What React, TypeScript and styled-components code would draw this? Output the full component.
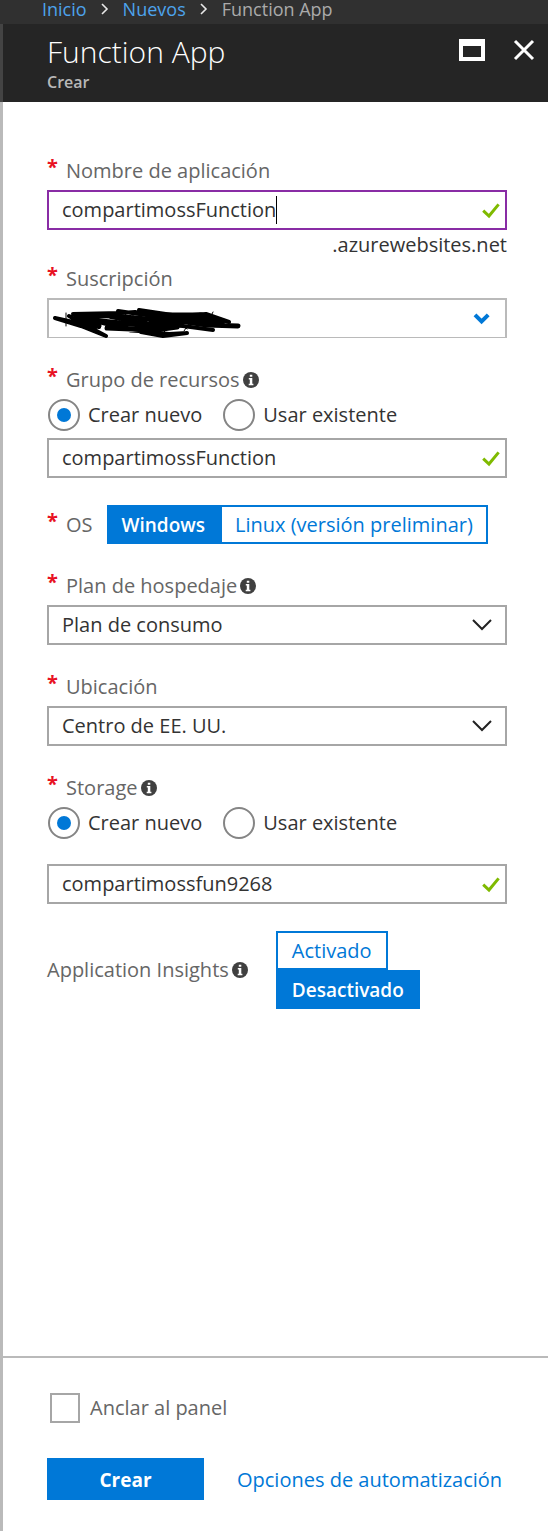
import React, { useState } from "react";
import styled, { createGlobalStyle } from "styled-components";

const GlobalStyle = createGlobalStyle`
  *, *::before, *::after { box-sizing: border-box; }
  body { margin: 0; background: #fff; }
  body, button, input, select {
    font-family: "Open Sans", "Noto Sans", sans-serif;
    font-size: 20px;
    line-height: 24px;
  }
`;

const Page = styled.div`
  display: flex;
  flex-direction: column;
  min-height: 100vh;
  color: #333;
`;

const Breadcrumb = styled.nav`
  display: flex;
  align-items: center;
  gap: 14px;
  height: 24px;
  padding: 0 42px 6px;
  background: #303030;
  font-size: 18px;
  color: #aaa;
  white-space: nowrap;
`;

const CrumbLink = styled.a`
  color: #4da3ec;
  text-decoration: none;
`;

const Header = styled.header`
  display: flex;
  justify-content: space-between;
  align-items: flex-start;
  height: 78px;
  padding: 10px 13px 0 44px;
  border-left: 3px solid #444;
  background: #252525;
`;

const Title = styled.h1`
  margin: 0;
  font-size: 30px;
  line-height: 36px;
  font-weight: 300;
  color: #fff;
`;

const Subtitle = styled.p`
  margin: 0;
  font-size: 16px;
  line-height: 24px;
  font-weight: 600;
  color: #b8b8b8;
`;

const WindowActions = styled.div`
  display: flex;
  align-items: center;
  gap: 28px;
  height: 32px;
`;

const IconButton = styled.button`
  display: flex;
  padding: 0;
  border: 0;
  background: none;
  cursor: pointer;
`;

const Blade = styled.div`
  display: flex;
  flex: 1;
  flex-direction: column;
  border-left: 3px solid #bababa;
`;

const Form = styled.form`
  display: flex;
  flex: 1;
  flex-direction: column;
  gap: 27px;
  padding: 54px 41px 30px 44px;
`;

const Section = styled.div`
  display: flex;
  flex-direction: column;
  gap: 7px;
  padding-top: 3px;
`;

const FieldGroup = styled.div`
  display: flex;
  flex-direction: column;
  gap: 7px;
`;

const LabelRow = styled.div`
  display: flex;
  align-items: center;
  gap: 3px;
  height: 24px;
  color: #666;
  white-space: nowrap;
`;

const Star = styled.span`
  align-self: flex-start;
  width: 16px;
  line-height: 16px;
  font-weight: 700;
  color: #e81123;
`;

const InputFrame = styled.div<{ $focused?: boolean }>`
  display: flex;
  align-items: center;
  height: 40px;
  padding: 0 5px 0 13px;
  border: 2px solid ${(p) => (p.$focused ? "#892ca5" : "#a6a6a6")};
`;

const TextInput = styled.input`
  field-sizing: content;
  max-width: 90%;
  height: 28px;
  padding: 0 0 2px;
  border: 0;
  outline: 0;
  background: none;
  color: #333;
`;

const Caret = styled.span`
  width: 1px;
  height: 28px;
  background: #000;
`;

const Spacer = styled.span`
  flex: 1;
`;

const Suffix = styled.div`
  margin-top: -4px;
  text-align: right;
`;

const SelectFrame = styled.div<{ $muted?: boolean }>`
  position: relative;
  height: 40px;
  border: 2px solid ${(p) => (p.$muted ? "#bababa" : "#a6a6a6")};
  border-bottom-width: ${(p) => (p.$muted ? "1px" : "2px")};
`;

const Select = styled.select`
  appearance: none;
  width: 100%;
  height: 100%;
  padding: 0 40px 0 13px;
  border: 0;
  border-radius: 0;
  background: none;
  color: #333;
`;

const SelectIcon = styled.span`
  position: absolute;
  top: 0;
  right: 13px;
  bottom: 0;
  display: flex;
  align-items: center;
  pointer-events: none;
`;

const ScribbleLayer = styled.span`
  position: absolute;
  top: 8px;
  left: 2px;
  display: flex;
  pointer-events: none;
`;

const RadioRow = styled.div`
  display: flex;
  gap: 21px;
  padding-left: 1px;
`;

const RadioLabel = styled.label`
  display: flex;
  align-items: center;
  gap: 8px;
  height: 32px;
`;

const Radio = styled.input`
  appearance: none;
  display: grid;
  place-items: center;
  width: 32px;
  height: 32px;
  margin: 0;
  border: 2px solid #858585;
  border-radius: 50%;
  &:checked::before {
    content: "";
    width: 14px;
    height: 14px;
    border-radius: 50%;
    background: #0078d7;
  }
`;

const StorageSection = styled.div`
  display: flex;
  flex-direction: column;
  gap: 25px;
`;

const ToggleRow = styled.div`
  display: flex;
  align-items: center;
  gap: 14px;
`;

const InsightsRow = styled(ToggleRow)`
  gap: 28px;
`;

const Toggle = styled.div<{ $stacked?: boolean }>`
  display: flex;
  flex-direction: ${(p) => (p.$stacked ? "column" : "row")};
  align-items: flex-start;
`;

const ToggleButton = styled.button<{ $stacked?: boolean }>`
  height: 39px;
  padding: 0 ${(p) => (p.$stacked ? "14px" : "13px")};
  border: 2px solid #0078d7;
  background: #fff;
  color: #0078d7;
  white-space: nowrap;
  &[aria-pressed="true"] {
    background: #0078d7;
    color: #fff;
    font-size: 19px;
    font-weight: 600;
  }
  & + & {
    margin-left: ${(p) => (p.$stacked ? "0" : "-2px")};
  }
`;

const Footer = styled.footer`
  display: flex;
  flex-direction: column;
  gap: 35px;
  padding: 35px 44px 31px;
  border-top: 2px solid #bababa;
`;

const CheckLabel = styled.label`
  display: flex;
  align-items: center;
  gap: 10px;
  padding-left: 3px;
  color: #666;
`;

const Checkbox = styled.input`
  appearance: none;
  width: 30px;
  height: 30px;
  margin: 0;
  border: 2px solid #a6a6a6;
  &:checked {
    background: #0078d7;
  }
`;

const Actions = styled.div`
  display: flex;
  align-items: center;
  gap: 33px;
`;

const CreateButton = styled.button`
  width: 157px;
  height: 42px;
  padding: 2px 0 0;
  border: 0;
  background: #0078d7;
  color: #fff;
  font-size: 19px;
  font-weight: 700;
`;

const ActionLink = styled.a`
  padding-top: 2px;
  color: #0078d7;
  text-decoration: none;
  white-space: nowrap;
`;

const CrumbArrow = () => (
  <svg width="8" height="12" viewBox="0 0 8 12" fill="none" stroke="#e8e8e8" strokeWidth="1.6" aria-hidden="true">
    <path d="M1 1l5 5-5 5" />
  </svg>
);

const Check = () => (
  <svg width="18" height="18" viewBox="0 0 18 18" fill="none" stroke="#7fba00" strokeWidth="3" aria-hidden="true">
    <path d="M1.2 9.6L7 15 16.6 3.4" />
  </svg>
);

const Chevron = () => (
  <svg width="20" height="12" viewBox="0 0 20 12" fill="none" stroke="#222" strokeWidth="2" aria-hidden="true">
    <path d="M1 1l9 9 9-9" />
  </svg>
);

const BoldChevron = () => (
  <svg width="20" height="12" viewBox="0 0 20 12" fill="none" stroke="#0078d7" strokeWidth="4" aria-hidden="true">
    <path d="M3 1.9L9.6 8.4l6.6-6.5" />
  </svg>
);

const Info = () => (
  <svg width="16" height="16" viewBox="0 0 16 16" role="img" aria-label="Información">
    <circle cx="8" cy="8" r="8" fill="#404040" />
    <path d="M6.8 2.7h2.5v2H6.8zM5.8 6h3.5v5.8h1.1v1.4H5.7v-1.4h1.1V7.4h-1z" fill="#fff" />
  </svg>
);

const Scribble = () => (
  <svg width="192" height="32" viewBox="0 0 192 32" fill="none" stroke="#000" strokeLinecap="round" strokeLinejoin="round" aria-hidden="true">
    <path d="M15 5v13M28 8l3 8M67 5l2 12M75 5l-3 12M82 6v10M106 18v6M116 16l-3 9M130 14l6 7M139 14l-6 9M162 4l-3 6M149 5v10" strokeWidth="1" />
    <path
      d="M4 10L22 14 48 19 M4 10L30 18 55 28 40 20 18 8 M22 6L70 5 84 4 110 11 M67 3L88 6 120 10 M88 2L128 8 155 6 178 14 M60 9L96 16 132 18 162 22 M34 9L70 19 100 24 118 26 136 25 M90 24L112 28 136 25"
      strokeWidth="4"
    />
    <path
      d="M26 7L62 8 96 11 M30 11L70 15 108 18 M24 10L48 18 M100 9L140 10 170 14 M104 7L150 7 172 13 M128 13L156 17 187 18 M100 13L140 14 M50 14L80 22 112 24 M56 20L104 22 126 19 M86 15L116 18"
      strokeWidth="5"
    />
  </svg>
);

const storageChoices = ["Crear nuevo", "Usar existente"];

function RadioPair({ name, label }: { name: string; label: string }) {
  return (
    <RadioRow role="radiogroup" aria-label={label}>
      {storageChoices.map((text, i) => (
        <RadioLabel key={text}>
          <Radio type="radio" name={name} defaultChecked={i === 0} />
          {text}
        </RadioLabel>
      ))}
    </RadioRow>
  );
}

interface FieldLabelProps {
  text: string;
  htmlFor?: string;
  info?: boolean;
  optional?: boolean;
}

function FieldLabel({ text, htmlFor, info, optional }: FieldLabelProps) {
  return (
    <LabelRow>
      {!optional && <Star>*</Star>}
      {htmlFor ? <label htmlFor={htmlFor}>{text}</label> : <span>{text}</span>}
      {info && <Info />}
    </LabelRow>
  );
}

interface ValidatedInputProps {
  id: string;
  value: string;
  label?: string;
  focused?: boolean;
}

function ValidatedInput({ id, value, label, focused }: ValidatedInputProps) {
  return (
    <InputFrame $focused={focused}>
      <TextInput id={id} type="text" defaultValue={value} aria-label={label} spellCheck={false} />
      {focused && <Caret />}
      <Spacer />
      <Check />
    </InputFrame>
  );
}

interface ToggleGroupProps {
  label: string;
  options: string[];
  initial: string;
  stacked?: boolean;
}

function ToggleGroup({ label, options, initial, stacked }: ToggleGroupProps) {
  const [selected, setSelected] = useState(initial);
  return (
    <Toggle role="group" aria-label={label} $stacked={stacked}>
      {options.map((option) => (
        <ToggleButton
          key={option}
          type="button"
          $stacked={stacked}
          aria-pressed={option === selected}
          onClick={() => setSelected(option)}
        >
          {option}
        </ToggleButton>
      ))}
    </Toggle>
  );
}

export default function App() {
  return (
    <Page>
      <GlobalStyle />
      <Breadcrumb aria-label="Ruta">
        <CrumbLink href="#inicio">Inicio</CrumbLink>
        <CrumbArrow />
        <CrumbLink href="#nuevos">Nuevos</CrumbLink>
        <CrumbArrow />
        <span>Function App</span>
      </Breadcrumb>
      <Header>
        <div>
          <Title>Function App</Title>
          <Subtitle>Crear</Subtitle>
        </div>
        <WindowActions>
          <IconButton type="button" aria-label="Maximizar">
            <svg width="26" height="22" viewBox="0 0 26 22">
              <path fillRule="evenodd" fill="#fff" d="M0 0h26v22H0zM4 7v11h18V7z" />
            </svg>
          </IconButton>
          <IconButton type="button" aria-label="Cerrar">
            <svg width="22" height="22" viewBox="0 0 22 22" stroke="#fff" strokeWidth="3">
              <path d="M2 2l18 18M20 2L2 20" />
            </svg>
          </IconButton>
        </WindowActions>
      </Header>
      <Blade>
        <Form>
          <FieldGroup>
            <Section>
              <FieldLabel text="Nombre de aplicación" htmlFor="app-name" />
              <ValidatedInput id="app-name" value="compartimossFunction" focused />
              <Suffix>.azurewebsites.net</Suffix>
            </Section>
            <Section>
              <FieldLabel text="Suscripción" htmlFor="subscription" />
              <SelectFrame $muted>
                <Select id="subscription" />
                <ScribbleLayer>
                  <Scribble />
                </ScribbleLayer>
                <SelectIcon>
                  <BoldChevron />
                </SelectIcon>
              </SelectFrame>
            </Section>
          </FieldGroup>
          <Section>
            <FieldLabel text="Grupo de recursos" info />
            <RadioPair name="group" label="Grupo de recursos" />
            <ValidatedInput id="group-name" label="Grupo de recursos" value="compartimossFunction" />
          </Section>
          <ToggleRow>
            <FieldLabel text="OS" />
            <ToggleGroup label="OS" options={["Windows", "Linux (versión preliminar)"]} initial="Windows" />
          </ToggleRow>
          <Section>
            <FieldLabel text="Plan de hospedaje" htmlFor="plan" info />
            <SelectFrame>
              <Select id="plan">
                <option>Plan de consumo</option>
              </Select>
              <SelectIcon>
                <Chevron />
              </SelectIcon>
            </SelectFrame>
          </Section>
          <Section>
            <FieldLabel text="Ubicación" htmlFor="location" />
            <SelectFrame>
              <Select id="location">
                <option>Centro de EE. UU.</option>
              </Select>
              <SelectIcon>
                <Chevron />
              </SelectIcon>
            </SelectFrame>
          </Section>
          <StorageSection>
            <Section>
              <FieldLabel text="Storage" info />
              <RadioPair name="storage" label="Storage" />
            </Section>
            <ValidatedInput id="storage-name" label="Storage" value="compartimossfun9268" />
          </StorageSection>
          <InsightsRow>
            <FieldLabel text="Application Insights" info optional />
            <ToggleGroup
              label="Application Insights"
              options={["Activado", "Desactivado"]}
              initial="Desactivado"
              stacked
            />
          </InsightsRow>
        </Form>
        <Footer>
          <CheckLabel>
            <Checkbox type="checkbox" />
            Anclar al panel
          </CheckLabel>
          <Actions>
            <CreateButton type="button">Crear</CreateButton>
            <ActionLink href="#automatizacion">Opciones de automatización</ActionLink>
          </Actions>
        </Footer>
      </Blade>
    </Page>
  );
}
